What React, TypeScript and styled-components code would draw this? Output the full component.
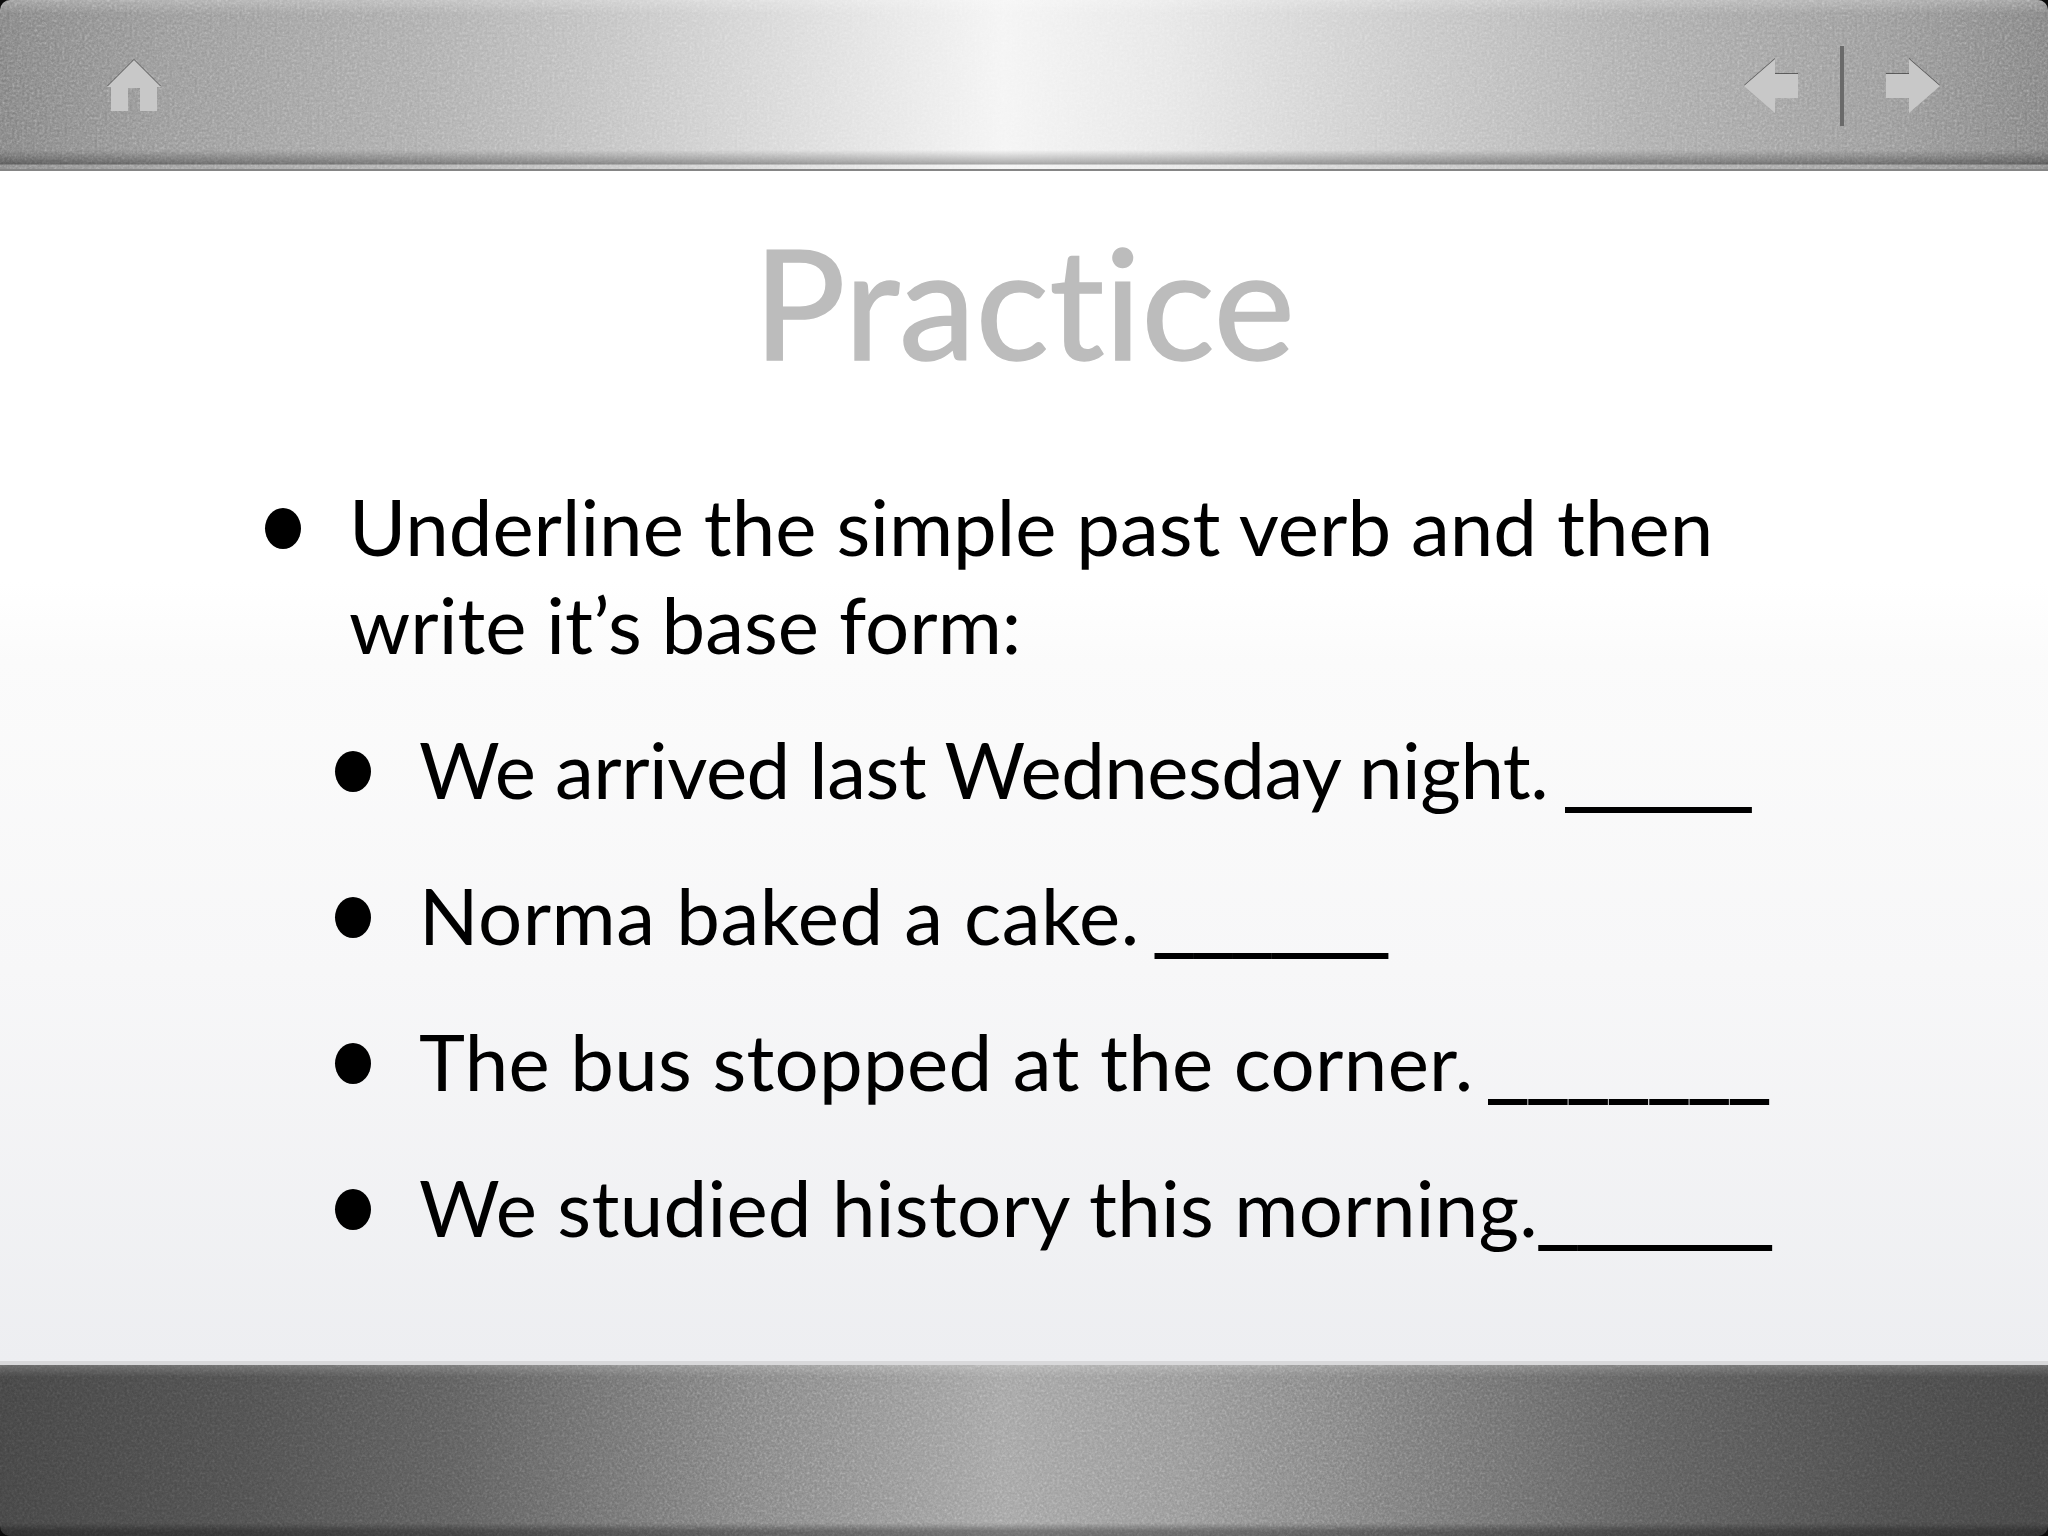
import React from "react";
import styled, { createGlobalStyle } from "styled-components";

const Global = createGlobalStyle`
  html, body { margin: 0; padding: 0; background: #0c0c0c; }
  body { width: 2048px; height: 1536px; overflow: hidden; font-family: "Lato", "Open Sans", sans-serif; font-variant-ligatures: none; }
`;

const Page = styled.div`
  width: 2048px;
  height: 1536px;
  display: flex;
  flex-direction: column;
`;

const Bar = styled.div<{ $pos: "top" | "bottom" }>`
  position: relative;
  overflow: hidden;
  flex: none;
  display: flex;
  align-items: center;
  justify-content: space-between;
  box-sizing: border-box;
  height: ${(p) => (p.$pos === "top" ? "171px" : "175px")};
  padding: ${(p) => (p.$pos === "top" ? "3px 108px 0 106px" : "0")};
  border-radius: ${(p) => (p.$pos === "top" ? "10px 10px 0 0" : "0 0 10px 10px")};
  background: ${(p) =>
    p.$pos === "top"
      ? "linear-gradient(90deg, #7e7e7e 0%, #949494 8%, #a8a8a8 20%, #bcbcbc 28%, #dadada 39%, #f4f4f4 49%, #e6e6e6 57%, #d6d6d6 63%, #c6c6c6 69%, #aaaaaa 80%, #969696 92%, #7e7e7e 100%)"
      : "linear-gradient(90deg, #424242 0%, #4c4c4c 12%, #5a5a5a 22%, #6e6e6e 30%, #8a8a8a 41%, #a0a0a0 49%, #929292 58%, #787878 68%, #5c5c5c 80%, #4a4a4a 92%, #424242 100%)"};
  ${(p) =>
    p.$pos === "top"
      ? "border-bottom: 2px solid #858585;"
      : "border-top: 4px solid #d8d8da;"}
`;

const Grain = styled.svg`
  position: absolute;
  inset: 0;
  width: 100%;
  height: 100%;
  mix-blend-mode: overlay;
  opacity: 0.6;
  pointer-events: none;
`;

const Shade = styled.div<{ $pos: "top" | "bottom" }>`
  position: absolute;
  inset: 0;
  pointer-events: none;
  background: ${(p) =>
    p.$pos === "top"
      ? "linear-gradient(180deg, rgba(255,255,255,0.22) 0, rgba(255,255,255,0) 14px, rgba(0,0,0,0) 150px, rgba(0,0,0,0.26) 162px, rgba(0,0,0,0.32) 164px, rgba(255,255,255,0.08) 165px, rgba(255,255,255,0.08) 169px)"
      : "linear-gradient(180deg, rgba(255,255,255,0.2) 0, rgba(255,255,255,0) 12px, rgba(0,0,0,0) 158px, rgba(0,0,0,0.3) 166px, rgba(0,0,0,0.32) 100%)"};
`;

const NavIcon = styled.svg`
  position: relative;
  display: block;
  fill: #c8c8c8;
  filter: drop-shadow(0 -1px 0.5px rgba(60, 60, 60, 0.7));
`;

const NavGroup = styled.div`
  position: relative;
  display: flex;
  align-items: center;
  gap: 42px;
`;

const NavDivider = styled.div`
  width: 4px;
  height: 80px;
  background: #6a6a6a;
`;

const Slide = styled.main`
  flex: 1;
  min-height: 0;
  box-sizing: border-box;
  padding-top: 50px;
  background: linear-gradient(180deg, #ffffff 0, #ffffff 410px, #fbfbfb 490px, #f7f7f8 800px, #edeef1 100%);
  display: flex;
  flex-direction: column;
`;

const Title = styled.h1`
  margin: 0;
  text-align: center;
  font-family: "Lato", sans-serif;
  font-weight: 400;
  font-size: 154px;
  line-height: 160px;
  color: #bcbcbc;
  -webkit-text-stroke: 1.5px #bcbcbc;
`;

const Lists = styled.div`
  margin-top: 96px;
  display: flex;
  flex-direction: column;
  color: #000;
  font-size: 78px;
`;

const Item = styled.div<{ $indent: number; $gap: number; $tight?: number }>`
  position: relative;
  margin-left: ${(p) => p.$indent}px;
  margin-top: ${(p) => p.$gap}px;
  line-height: 98px;
  white-space: pre;
  letter-spacing: ${(p) => p.$tight ?? 0}px;
  &::before {
    content: "";
    position: absolute;
    left: -84px;
    top: 31px;
    width: 36px;
    height: 41px;
    border-radius: 50%;
    background: #000;
  }
`;

const Line = styled.span`
  display: block;
`;

const Blank = styled.span<{ $space: number; $shift?: number }>`
  font-size: 100px;
  line-height: 0;
  letter-spacing: ${(p) => p.$space}px;
  margin-left: ${(p) => p.$shift ?? 0}px;
`;

function Noise({ id, seed }: { id: string; seed: number }) {
  return (
    <Grain aria-hidden="true">
      <filter id={id}>
        <feTurbulence type="fractalNoise" baseFrequency="0.4" numOctaves="2" seed={seed} />
        <feColorMatrix type="saturate" values="0" />
      </filter>
      <rect width="100%" height="100%" filter={`url(#${id})`} />
    </Grain>
  );
}

export default function App() {
  return (
    <Page>
      <Global />
      <Bar $pos="top">
        <Noise id="grain-top" seed={3} />
        <Shade $pos="top" />
        <NavIcon width="56" height="52" viewBox="0 0 56 52" aria-label="Home">
          <path d="M28 0 L55 27 L51 27 L51 51 L34 51 L34 28 L22 28 L22 51 L5 51 L5 27 L1 27 Z" />
        </NavIcon>
        <NavGroup>
          <NavIcon width="54" height="54" viewBox="0 0 54 54" aria-label="Previous">
            <path d="M0 27 L31 0 L31 15 L54 15 L54 39 L31 39 L31 54 Z" />
          </NavIcon>
          <NavDivider />
          <NavIcon width="54" height="54" viewBox="0 0 54 54" aria-label="Next">
            <path d="M54 27 L23 0 L23 15 L0 15 L0 39 L23 39 L23 54 Z" />
          </NavIcon>
        </NavGroup>
      </Bar>
      <Slide>
        <Title>Practice</Title>
        <Lists>
          <Item $indent={349} $gap={0}>
            <Line>Underline the simple past verb and then</Line>
            <Line>write it’s base form:</Line>
          </Item>
          <Item $indent={419} $gap={47} $tight={-0.5}>We arrived last Wednesday night. <Blank $space={-9} $shift={-6}>_____</Blank></Item>
          <Item $indent={419} $gap={48} $tight={0.55}>Norma baked a cake. <Blank $space={-7} $shift={-9}>______</Blank></Item>
          <Item $indent={419} $gap={48} $tight={0.3}>The bus stopped at the corner. <Blank $space={-5.6} $shift={-9}>_______</Blank></Item>
          <Item $indent={419} $gap={48} $tight={0.28}>We studied history this morning.<Blank $space={-7} $shift={-3}>______</Blank></Item>
        </Lists>
      </Slide>
      <Bar $pos="bottom">
        <Noise id="grain-bottom" seed={8} />
        <Shade $pos="bottom" />
      </Bar>
    </Page>
  );
}
